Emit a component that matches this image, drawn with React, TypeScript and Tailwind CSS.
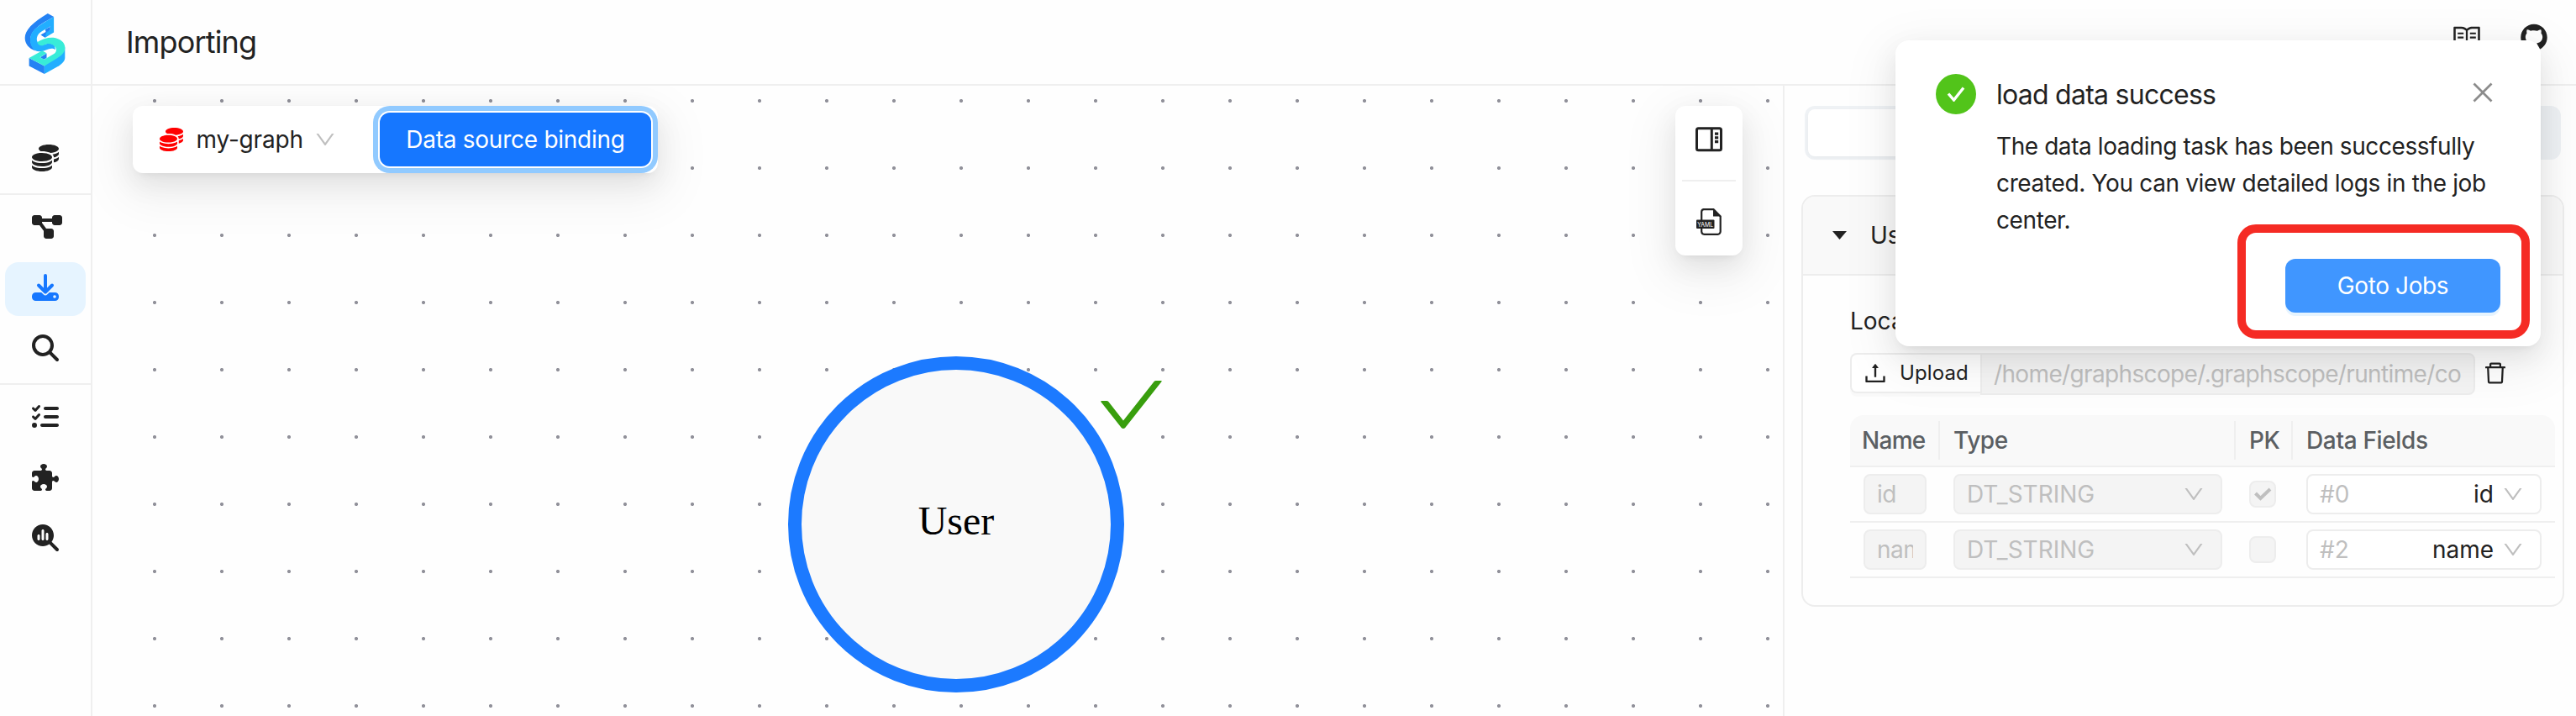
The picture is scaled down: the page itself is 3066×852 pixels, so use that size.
import type { ReactNode } from "react";
import { AiFillGithub, AiOutlineCheck, AiOutlineClose, AiOutlineDelete, AiOutlineDown, AiOutlineRead, AiOutlineUpload } from "react-icons/ai";
import { FaCoins, FaDiagramProject, FaListCheck, FaMagnifyingGlass, FaMagnifyingGlassChart, FaPuzzlePiece } from "react-icons/fa6";

function Logo() {
  return (
    <svg viewBox="88 46 148 222" className="h-[74px] w-[49px]">
      <path d="M172 48L194 60C150 84 112 105 110 140C110 160 118 172 128 183C104 174 90 158 90 136C90 108 118 80 172 48Z" fill="#2482f4" />
      <path d="M194 60V116L163 135L147 125L181 108V95L152 112C136 121 130 136 134 148C138 160 150 164 160 160C176 154 190 156 196 164L200 178C180 168 166 182 152 184C136 188 122 182 116 170C108 156 106 138 114 120C124 98 160 80 194 60Z" fill="#22aeff" />
      <path d="M163 135L147 125L165 115L163 106L181 96V108L166 118Z" fill="#2482f4" />
      <path d="M234 170V208C232 222 222 230 206 240L160 266V236Z" fill="#22aeff" />
      <path d="M105 208L160 237V266L105 237Z" fill="#2482f4" />
      <path d="M145 206L168 192V208L158 214Z" fill="#2482f4" />
      <path d="M134 152C150 140 172 134 192 135C216 138 234 152 234 170C234 188 224 198 206 209L160 237L105 208L152 182L168 191L144 206L160 214L192 195C204 188 206 176 198 168C190 156 172 154 158 162C148 166 138 164 134 152Z" fill="#38ecd8" />
    </svg>
  );
}

function ImportIcon() {
  return (
    <svg viewBox="0 0 32 32" className="h-8 w-8" fill="none" strokeLinecap="round" strokeLinejoin="round">
      <path d="M4.5 22H27.5A4.5 4.5 0 0 1 32 26.500V27.500A4.500 4.500 0 0 1 27.500 32H4.500A4.500 4.500 0 0 1 0 27.500V26.500A4.500 4.500 0 0 1 4.500 22Z" fill="#1677ff" />
      <path d="M8 14L16 21.800L24 14" stroke="#e6f4ff" strokeWidth="7" />
      <path d="M16 2V21M8 13.500L16 21.500L24 13.500" stroke="#1677ff" strokeWidth="4" />
      <circle cx="27" cy="27" r="1.800" fill="#e6f4ff" />
    </svg>
  );
}

function PanelIcon() {
  return (
    <svg viewBox="0 0 32 32" className="h-8 w-8">
      <rect x="1.500" y="2.800" width="29" height="26" rx="2" fill="none" stroke="#222" strokeWidth="3" />
      <path d="M19.300 3V29" stroke="#222" strokeWidth="3" />
      <path d="M23 9.100H27.200M23 13.800H27.200M23 18.600H27.200" stroke="#222" strokeWidth="3.200" />
    </svg>
  );
}

function YamlIcon() {
  return (
    <svg viewBox="0 0 32 32" className="h-8 w-8">
      <path d="M9 1.200H21.500L29.700 9.500V27.500A3.200 3.200 0 0 1 26.500 30.800H10.500A3.500 3.500 0 0 1 7.200 27.500V4A3 3 0 0 1 10 1.200Z" fill="none" stroke="#222" strokeWidth="2.200" />
      <path d="M21 1.500V9.500H30Z" fill="#222" />
      <rect x="1" y="13.500" width="21.500" height="10.500" rx="1" fill="#222" />
      <text x="2.200" y="21.500" fontSize="7.600" textLength="19" lengthAdjust="spacingAndGlyphs" fill="#fff" fontFamily="Inter, sans-serif">YAML</text>
    </svg>
  );
}

function NavItem({ active, children }: { active?: boolean; children: ReactNode }) {
  return (
    <button className={`mx-1.5 flex h-16 items-center rounded-2xl pb-1 pl-8 ${active ? "bg-[#e6f4ff] text-[#1677ff]" : "text-[#222]"}`}>
      {children}
    </button>
  );
}

function Divider() {
  return <div className="h-0.5 bg-[#efefef]" />;
}

function Sidebar() {
  return (
    <aside className="flex w-[110px] shrink-0 flex-col border-r-2 border-[#efefef]">
      <div className="flex h-[102px] shrink-0 items-start border-b-2 border-[#efefef] pt-[15px] pl-[29px]">
        <Logo />
      </div>
      <nav className="flex flex-col gap-2 pt-14">
        <NavItem><FaCoins className="h-8 w-8" /></NavItem>
        <Divider />
        <NavItem><FaDiagramProject className="h-8 w-9" /></NavItem>
        <NavItem active><ImportIcon /></NavItem>
        <NavItem><FaMagnifyingGlass className="h-8 w-8" /></NavItem>
        <Divider />
        <NavItem><FaListCheck className="h-8 w-8" /></NavItem>
        <NavItem><FaPuzzlePiece className="h-8 w-8" /></NavItem>
        <NavItem><FaMagnifyingGlassChart className="h-8 w-8" /></NavItem>
      </nav>
    </aside>
  );
}

const floating = "shadow-[0_12px_32px_rgba(0,0,0,0.08),0_6px_12px_-8px_rgba(0,0,0,0.12),0_18px_56px_16px_rgba(0,0,0,0.05)]";

function Canvas() {
  return (
    <main className="relative w-[2012px] shrink-0 overflow-hidden bg-[radial-gradient(circle,#91919a_1.7px,transparent_2.4px)] bg-[length:80px_80px] bg-[position:34px_-22px]">
      <div className={`absolute top-6 left-12 flex h-20 w-[625px] items-center rounded-xl bg-white ${floating}`}>
        <FaCoins className="ml-8 size-7 text-[#ff0000]" />
        <span className="ml-[15.5px] tracking-[-0.17px]">my-graph</span>
        <AiOutlineDown className="ml-[12px] size-7 text-[#bfbfbf]" />
        <button className="absolute top-2 right-2 h-16 w-[323px] rounded-xl bg-[#1677ff] tracking-[-0.26px] text-white ring-6 ring-[#91caff] ring-offset-2 ring-offset-white">
          Data source binding
        </button>
      </div>
      <div className={`absolute top-6 left-[1884px] flex h-[178px] w-20 flex-col items-center rounded-xl bg-white ${floating}`}>
        <div className="pt-6"><PanelIcon /></div>
        <div className="mt-8 h-0.5 w-16 bg-[#efefef]" />
        <div className="pt-8"><YamlIcon /></div>
      </div>
      <div className="absolute top-[322px] left-[828px] flex size-[400px] items-center justify-center rounded-full border-16 border-[#1c7aff] bg-[#f9f9f9] pb-[8px] font-['Liberation_Serif',serif] text-[48px] text-black">
        User
      </div>
      <AiOutlineCheck className="absolute top-[334px] left-[1191px] size-[91px] text-[#389e0d]" />
    </main>
  );
}

const rows = [
  { name: "id", index: "#0", pk: true },
  { name: "name", index: "#2", pk: false },
];

function FieldTable() {
  return (
    <div className="mt-6 w-[839px]">
      <div className="flex h-[62px] items-center rounded-t-2xl border-b-2 border-[#efefef] bg-[#f9f9f9] font-medium text-[#5b5f63]">
        <div className="w-[105px] pl-3.5 tracking-[-0.7px]">Name</div>
        <div className="h-[46px] w-0.5 bg-[#efefef]" />
        <div className="w-[350px] pl-4 tracking-[-0.4px]">Type</div>
        <div className="h-[46px] w-0.5 bg-[#efefef]" />
        <div className="w-[66px] pl-4 tracking-[-0.4px]">PK</div>
        <div className="h-[46px] w-0.5 bg-[#efefef]" />
        <div className="pl-4 tracking-[-0.35px]">Data Fields</div>
      </div>
      {rows.map((row) => (
        <div key={row.name} className="flex h-[66px] items-center border-b-2 border-[#efefef]">
          <div className="ml-4 flex h-12 w-[75px] items-center rounded-lg border-2 border-[#ededed] bg-[#f4f4f4] px-3.5 text-[#bfbfbf]">
            <span className="overflow-hidden leading-10 tracking-[-0.5px]">{row.name}</span>
          </div>
          <div className="ml-8 flex h-12 w-[320px] items-center justify-between rounded-lg border-2 border-[#ededed] bg-[#f4f4f4] pr-[18px] pl-3.5 text-[#bfbfbf]">
            DT_STRING
            <AiOutlineDown className="size-7" />
          </div>
          <div className="ml-8 flex size-8 items-center justify-center rounded-lg border-2 border-[#ededed] bg-[#f4f4f4]">
            {row.pk && (
              <svg viewBox="0 0 24 18" className="h-[18px] w-6">
                <path d="M3.500 8L9.500 14L21 3" fill="none" stroke="#bfbfbf" strokeWidth="4" />
              </svg>
            )}
          </div>
          <div className="ml-9 flex h-12 w-[280px] items-center rounded-lg border-2 border-[#ededed] bg-white pr-[18px] pl-3.5">
            <span className="text-[#bfbfbf]">{row.index}</span>
            <span className="mr-[9px] ml-auto">{row.name}</span>
            <AiOutlineDown className="size-7 text-[#bfbfbf]" />
          </div>
        </div>
      ))}
    </div>
  );
}

function BindingPanel() {
  return (
    <section className="flex w-[944px] shrink-0 flex-col border-l-2 border-[#efefef] pt-6">
      <div className="ml-6 flex h-16 w-[900px] rounded-xl bg-[#eff2f5] p-1">
        <div className="h-14 w-1/2 rounded-lg bg-white shadow-[0_2px_4px_rgba(0,0,0,0.03)]" />
      </div>
      <div className="mt-[42px] ml-5 w-[908px] overflow-hidden rounded-2xl border-2 border-[#ededed]">
        <div className="flex h-[94px] items-center border-b-2 border-[#ededed] bg-[#f9f9f9]">
          <svg viewBox="0 0 17 10" className="ml-[35px] h-2.5 w-[17px]"><path d="M0 0H17L8.500 10Z" fill="#222" /></svg>
          <span className="ml-7">User</span>
        </div>
        <div className="pt-8 pb-8 pl-14">
          <div className="h-11 leading-[44px]">Location</div>
          <div className="mt-4 flex h-[50px] items-start">
            <button className="flex h-12 w-[155px] items-center rounded-l-lg border-2 border-r-0 border-[#ededed] bg-white text-[24px] shadow-[0_4px_0_rgba(0,0,0,0.02)]">
              <AiOutlineUpload className="ml-3 size-8 text-[#222]" />
              <span className="ml-[13px] tracking-[0.1px]">Upload</span>
            </button>
            <div className="flex h-[50px] w-[589px] items-center rounded-r-lg border-2 border-[#ededed] bg-[#f4f4f4] px-3.5 tracking-[-0.64px] text-[#bfbfbf]">
              <span className="w-full overflow-hidden leading-10 whitespace-nowrap">/home/graphscope/.graphscope/runtime/co</span>
            </div>
            <AiOutlineDelete className="mt-2 ml-2 size-8 text-[#222]" />
          </div>
          <FieldTable />
        </div>
      </div>
    </section>
  );
}

function Notification() {
  return (
    <div className={`absolute top-12 left-[2256px] h-[364px] w-[768px] rounded-2xl bg-white pt-10 pr-12 pl-12 ${floating}`}>
      <div className="flex h-12 items-center">
        <div className="flex size-12 items-center justify-center rounded-full bg-[#52c41a]">
          <svg viewBox="0 0 22 18" className="h-[18px] w-[22px]"><path d="M2 8.500L8.500 16L20 1.500" fill="none" stroke="#fff" strokeWidth="3.400" /></svg>
        </div>
        <span className="ml-6 pt-px text-[32px] tracking-[-0.74px]">load data success</span>
        <AiOutlineClose className="mr-1 mb-1 ml-auto size-[34px] text-[#8c8c8c]" />
      </div>
      <div className="mt-4 pl-[72px] leading-[44px] whitespace-nowrap">
        <div className="tracking-[-0.42px]">The data loading task has been successfully</div>
        <div className="tracking-[-0.35px]">created. You can view detailed logs in the job</div>
        <div className="tracking-[-0.4px]">center.</div>
      </div>
      <button className="mt-6 ml-auto block h-16 w-64 rounded-xl bg-[#4096ff] tracking-[-0.39px] text-white shadow-[0_4px_0_#e6f4ff]">
        Goto Jobs
      </button>
      <div className="absolute top-[219px] left-[407px] h-[136px] w-[348px] rounded-[22px] border-10 border-[#f52b24]" />
    </div>
  );
}

export default function App() {
  return (
    <div className="relative flex h-[852px] w-[3066px] overflow-hidden bg-[#fefefe] font-['Inter',sans-serif] text-[28px] leading-none text-[#222]">
      <Sidebar />
      <div className="flex w-[2956px] shrink-0 flex-col">
        <header className="flex h-[102px] shrink-0 items-center border-b-2 border-[#efefef] pr-8 pl-10">
          <h1 className="text-[36px] leading-[44px] tracking-[-0.84px]">Importing</h1>
          <AiOutlineRead className="mb-3 ml-auto size-9" />
          <AiFillGithub className="mb-3 ml-11 size-9" />
        </header>
        <div className="flex min-h-0 flex-1">
          <Canvas />
          <BindingPanel />
        </div>
      </div>
      <Notification />
    </div>
  );
}
